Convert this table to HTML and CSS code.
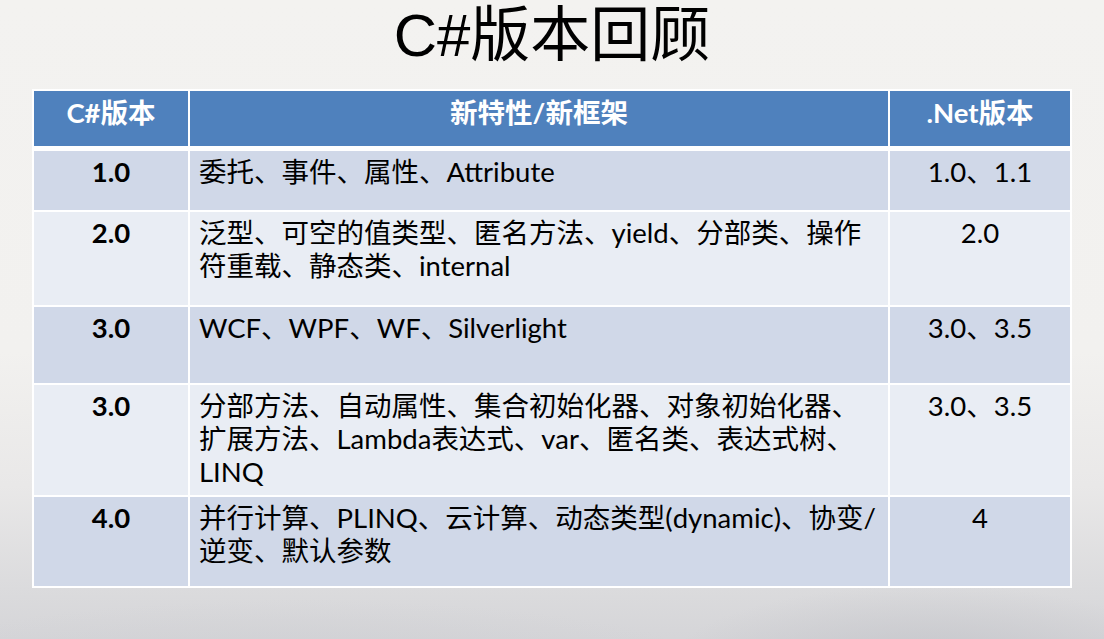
FILE: index.html
```html
<!DOCTYPE html>
<html lang="zh-CN">
<head>
<meta charset="utf-8">
<title>C#版本回顾</title>
<link rel="stylesheet" href="styles.css">
</head>
<body>
<main class="slide">
  <h1 class="title">C#版本回顾</h1>
  <div class="table">
    <div class="row head">
      <div class="cell c1">C#版本</div>
      <div class="cell c2 center">新特性/新框架</div>
      <div class="cell c3">.Net版本</div>
    </div>
    <div class="tbody">
      <div class="row odd r1">
        <div class="cell c1">1.0</div>
        <div class="cell c2">委托、事件、属性、Attribute</div>
        <div class="cell c3">1.0、1.1</div>
      </div>
      <div class="row even r2">
        <div class="cell c1">2.0</div>
        <div class="cell c2">泛型、可空的值类型、匿名方法、yield、分部类、操作<br>符重载、静态类、internal</div>
        <div class="cell c3">2.0</div>
      </div>
      <div class="row odd r3">
        <div class="cell c1">3.0</div>
        <div class="cell c2">WCF、WPF、WF、Silverlight</div>
        <div class="cell c3">3.0、3.5</div>
      </div>
      <div class="row even r4">
        <div class="cell c1">3.0</div>
        <div class="cell c2">分部方法、自动属性、集合初始化器、对象初始化器、<br>扩展方法、Lambda表达式、var、匿名类、表达式树、<br>LINQ</div>
        <div class="cell c3">3.0、3.5</div>
      </div>
      <div class="row odd r5">
        <div class="cell c1">4.0</div>
        <div class="cell c2">并行计算、PLINQ、云计算、动态类型(dynamic)、协变/<br>逆变、默认参数</div>
        <div class="cell c3">4</div>
      </div>
    </div>
  </div>
</main>
</body>
</html>
```
FILE: styles.css
```css
html, body {
  margin: 0;
  padding: 0;
}
body {
  width: 1104px;
  height: 639px;
  overflow: hidden;
  background:
    radial-gradient(ellipse 260px 80px at 930px 665px, rgba(196,197,202,0.9), rgba(196,197,202,0) 100%),
    radial-gradient(ellipse 420px 70px at 300px 670px, rgba(205,206,210,0.7), rgba(205,206,210,0) 100%),
    linear-gradient(to bottom, #f3f2f0 0%, #f2f1ef 55%, #e9e8e8 76%, #dbdbdd 92%, #d5d5d8 100%);
  font-family: "Lato", "Noto Sans CJK SC", sans-serif;
  color: #000;
}
.slide {
  display: flex;
  flex-direction: column;
  align-items: center;
}
.title {
  margin: 0;
  height: 89px;
  padding-top: 1px;
  box-sizing: border-box;
  font-family: "Liberation Sans Narrow", "Liberation Sans", "Noto Sans CJK SC", sans-serif;
  font-weight: 400;
  font-size: 60px;
  line-height: 70px;
  color: #000;
  text-align: center;
}
.table {
  width: 1040px;
  box-sizing: border-box;
  background: #fff;
  padding: 2px;
  display: flex;
  flex-direction: column;
  gap: 5px;
}
.tbody {
  display: flex;
  flex-direction: column;
  gap: 2px;
}
.row {
  display: grid;
  grid-template-columns: 154px 698px 180px;
  column-gap: 2px;
}
.cell {
  font-size: 27.5px;
  line-height: 33px;
  padding-top: 4px;
  white-space: nowrap;
  box-sizing: border-box;
}
.c1 {
  text-align: center;
  font-weight: 700;
}
.c2 {
  padding-left: 9px;
  text-align: left;
}
.c3 {
  text-align: center;
}
.head {
  height: 55px;
}
.head .cell {
  background: #4f81bd;
  color: #fff;
  font-weight: 700;
  padding-top: 5px;
}
.head .c2.center {
  padding-left: 0;
  text-align: center;
}
.odd .cell {
  background: #d0d8e8;
}
.even .cell {
  background: #e9edf4;
}
.r1 { height: 59px; }
.r2 { height: 93px; }
.r3 { height: 76px; }
.r4 { height: 110px; }
.r5 { height: 89px; }
```
